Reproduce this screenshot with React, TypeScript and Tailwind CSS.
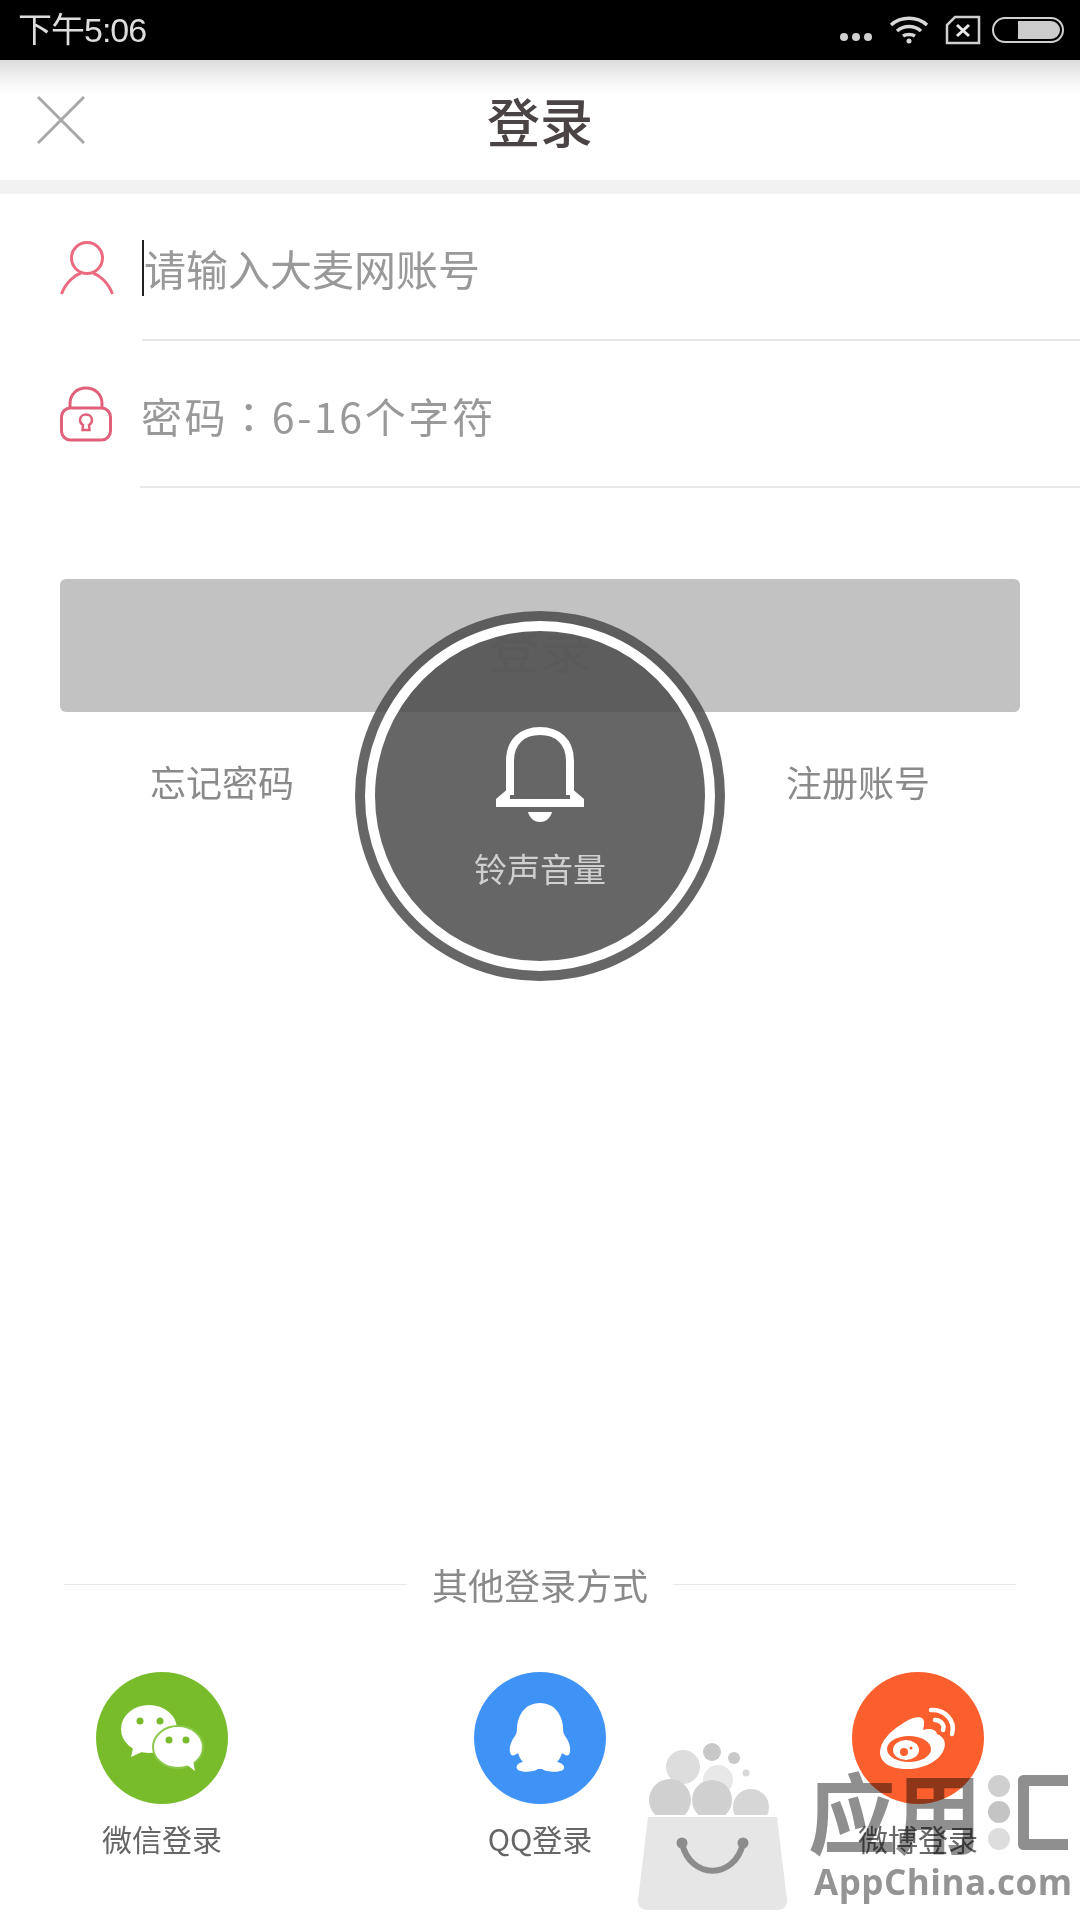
const cjk = "font-['Noto_Sans_CJK_SC','Noto_Sans',sans-serif]"

function StatusBar() {
  return (
    <div className="h-[60px] shrink-0 bg-black flex items-center justify-between pl-[18px] pr-[16px]">
      <span className={`text-[34px] leading-none text-[#dddddd] font-['Liberation_Sans','Noto_Sans_CJK_SC',sans-serif] tracking-[-1px]`}>下午5:06</span>
      <div className="flex items-center">
        <svg width="36" height="10" viewBox="0 0 36 10" className="mt-[14px] mr-[14px]">
          <circle cx="5" cy="5" r="4" fill="#d0d0d0" />
          <circle cx="17" cy="5" r="4" fill="#d0d0d0" />
          <circle cx="29" cy="5" r="4" fill="#d0d0d0" />
        </svg>
        <svg width="40" height="30" viewBox="0 0 40 30" fill="none" stroke="#d8d8d8" strokeWidth="3.5" className="mr-[16px]">
          <path d="M2 10C12 1 28 1 38 10" />
          <path d="M8 16C15 10 25 10 32 16" />
          <path d="M14 21C17 19 23 19 26 21" />
          <circle cx="20" cy="26" r="2.5" fill="#d8d8d8" stroke="none" />
        </svg>
        <svg width="36" height="30" viewBox="0 0 36 30" fill="none" stroke="#d0d0d0" strokeWidth="2.5" className="mr-[11px]">
          <path d="M10 2H34V28H2V10Z" />
          <path d="M12 10L24 21M24 10L12 21" strokeWidth="3" stroke="#e8e8e8" />
        </svg>
        <div className="w-[72px] h-[26px] rounded-full border-2 border-[#d0d0d0] p-[2px] flex justify-end">
          <div className="w-[42px] h-full bg-[#cccccc] rounded-r-full" />
        </div>
      </div>
    </div>
  )
}

function NavBar() {
  return (
    <div className="h-[120px] shrink-0 relative bg-gradient-to-b from-[#dcdcdc] via-[#f8f8f8] via-20% to-white to-30% flex items-center justify-center">
      <svg width="48" height="48" viewBox="0 0 48 48" className="absolute left-[37px] top-[36px]" fill="none" stroke="#a8a8a8" strokeWidth="3">
        <path d="M1 1L47 47M47 1L1 47" />
      </svg>
      <span className={`text-[53px] leading-none font-medium text-[#4a4444] ${cjk}`}>登录</span>
    </div>
  )
}

function UserIcon() {
  return (
    <svg width="54" height="56" viewBox="0 0 54 56" fill="none" stroke="#ec6a80" strokeWidth="3">
      <circle cx="27" cy="18" r="15.5" />
      <path d="M1.5 54C6 42 15 35 21 33M52.5 54C48 42 39 35 33 33" />
    </svg>
  )
}

function LockIcon() {
  return (
    <svg width="52" height="56" viewBox="0 0 52 56" fill="none" stroke="#e0607a" strokeWidth="3">
      <path d="M10 22V18C10 8 17 2 26 2S42 8 42 18V22" />
      <rect x="1.5" y="22" width="49" height="32" rx="9" />
      <path d="M22.5 44H29.5L29 39C31.5 37.500 32 35.500 32 34C32 30.500 29 28.500 26 28.500S20 30.500 20 34C20 35.500 20.500 37.500 23 39Z" strokeWidth="2.5" />
    </svg>
  )
}

function WechatIcon() {
  return (
    <svg width="132" height="132" viewBox="0 0 132 132" className="block">
      <circle cx="66" cy="66" r="66" fill="#78bc2c" />
      <ellipse cx="53" cy="57" rx="28" ry="24" fill="#ffffff" />
      <path d="M37 76L35 85L48 79Z" fill="#ffffff" />
      <circle cx="44" cy="49" r="3.500" fill="#78bc2c" />
      <circle cx="64" cy="49" r="3.500" fill="#78bc2c" />
      <ellipse cx="82" cy="75" rx="25" ry="21" fill="#ffffff" stroke="#8cc84a" strokeWidth="2" />
      <path d="M90 92L99 99L97 88Z" fill="#ffffff" />
      <circle cx="73" cy="68" r="3.500" fill="#78bc2c" />
      <circle cx="90" cy="68" r="3.500" fill="#78bc2c" />
    </svg>
  )
}

function QQIcon() {
  return (
    <svg width="132" height="132" viewBox="0 0 132 132" className="block">
      <circle cx="66" cy="66" r="66" fill="#3f93f7" />
      <path
        d="M66 31C53 31 45 40 43 54C43 58 43 61 41 64C38 68 35 74 36 80C37 85 40 84 44 81C45 85 47 88 49 90C43 91 41 95 44 98C49 101 60 100 64 97C65 97 67 97 68 97C72 100 84 101 89 98C92 95 89 91 83 90C85 88 87 85 88 81C92 84 95 85 96 80C97 74 94 68 91 64C89 61 89 58 89 54C87 40 79 31 66 31Z"
        fill="#ffffff"
      />
    </svg>
  )
}

function WeiboIcon() {
  return (
    <svg width="132" height="132" viewBox="0 0 132 132" className="block">
      <circle cx="66" cy="66" r="66" fill="#fb5f2d" />
      <path
        d="M50 52C58 46 68 43 71 47C73 50 72 54 71 58C77 56 84 57 85 62C93 65 94 72 92 77C88 89 72 97 55 97C39 97 28 91 28 80C28 70 38 59 50 52Z"
        fill="#ffffff"
      />
      <ellipse cx="57" cy="77" rx="22" ry="13" fill="#fb5f2d" />
      <ellipse cx="54" cy="78" rx="13" ry="10" fill="#ffffff" />
      <circle cx="52" cy="80" r="4" fill="#fb5f2d" />
      <circle cx="59" cy="76" r="1.500" fill="#fb5f2d" />
      <g fill="none" stroke="#ffffff" strokeWidth="4.500" strokeLinecap="round">
        <path d="M79 38C92 37 104 48 100 62" />
        <path d="M83 48C88 48 93 52 91 58" />
      </g>
    </svg>
  )
}

function Social({ label, children }: { label: string; children: React.ReactNode }) {
  return (
    <div className="w-[132px] flex flex-col items-center">
      {children}
      <span className={`mt-[16px] text-[30px] leading-[36px] whitespace-nowrap text-[#666666] ${cjk}`}>{label}</span>
    </div>
  )
}

function VolumeToast() {
  return (
    <div className="absolute left-[355px] top-[611px] w-[370px] h-[370px] rounded-full bg-[#4b4b4b]/85 p-[10px]">
      <div className="w-full h-full rounded-full border-[10px] border-white flex flex-col items-center pt-[96px]">
        <svg width="88" height="96" viewBox="0 0 88 96" fill="none">
          <path d="M14 68V34C14 14 27 4 44 4S74 14 74 34V68" stroke="#ffffff" strokeWidth="8" />
          <path d="M0 80H88V72L74 60V72H14V60L0 72Z" fill="#ffffff" />
          <path d="M32 85H56C54 92 49 95 44 95S34 92 32 85Z" fill="#ffffff" />
        </svg>
        <span className={`mt-[25px] text-[33px] leading-[40px] text-[#cfcfcf] ${cjk}`}>铃声音量</span>
      </div>
    </div>
  )
}

function Watermark() {
  return (
    <div className="absolute left-[636px] top-[1740px] w-[440px] h-[175px] mix-blend-multiply">
      <svg width="154" height="175" viewBox="0 0 154 175" className="absolute left-0 top-0">
        <circle cx="47" cy="27" r="17" fill="#dddddd" />
        <circle cx="76" cy="12" r="9" fill="#c8c8c8" />
        <circle cx="98" cy="18" r="6" fill="#c8c8c8" />
        <circle cx="110" cy="33" r="3.500" fill="#d8d8d8" />
        <circle cx="82" cy="40" r="15" fill="#e8e8e8" />
        <circle cx="34" cy="60" r="21" fill="#d0d0d0" />
        <circle cx="76" cy="60" r="20" fill="#d0d0d0" />
        <circle cx="115" cy="67" r="18" fill="#d6d6d6" />
        <rect x="0" y="75" width="154" height="10" fill="#ffffff" />
        <path d="M12 77H141L151 160C151 167 147 170 141 170H12C6 170 2 167 2 160Z" fill="#e6e6e6" />
        <path d="M46 103C54 140 99 140 107 103" fill="none" stroke="#8c8c8c" strokeWidth="6" />
        <circle cx="46" cy="103" r="5.500" fill="#8c8c8c" />
        <circle cx="107" cy="103" r="5.500" fill="#8c8c8c" />
      </svg>
      <div className={`absolute left-[172px] top-[13px] text-[88px] leading-[112px] font-bold text-[#8f8f8f] tracking-[-2px] ${cjk}`}>应用</div>
      <svg width="85" height="82" viewBox="0 0 85 82" className="absolute left-[350px] top-[32px]">
        <circle cx="13" cy="14" r="11" fill="#cfcfcf" />
        <circle cx="13" cy="40" r="11" fill="#c4c4c4" />
        <circle cx="13" cy="67" r="11" fill="#dddddd" />
        <path d="M82 8.500H37.500V72.500H82" fill="none" stroke="#8f8f8f" strokeWidth="11" strokeLinejoin="round" />
      </svg>
      <div className="absolute left-[178px] top-[117px] text-[35px] leading-[50px] font-bold tracking-[0.5px] text-[#949494] font-['Open_Sans',sans-serif] whitespace-nowrap">AppChina.com</div>
    </div>
  )
}

export default function App() {
  return (
    <div className="relative w-[1080px] h-[1920px] overflow-hidden bg-white flex flex-col">
      <StatusBar />
      <NavBar />
      <div className="h-[14px] shrink-0 bg-[#f2f2f2]" />

      <div className="h-[147px] shrink-0 pl-[60px] flex items-start">
        <div className="mt-[46px]"><UserIcon /></div>
        <div className="ml-[28px] flex-1 h-full border-b-2 border-[#e8e8e8] flex items-start">
          <div className="mt-[46px] h-[56px] w-[2px] bg-[#222222] shrink-0" />
          <span className={`mt-[48px] text-[42px] leading-[52px] text-[#999999] ${cjk}`}>请输入大麦网账号</span>
        </div>
      </div>
      <div className="h-[147px] shrink-0 pl-[60px] flex items-start">
        <div className="mt-[45px]"><LockIcon /></div>
        <div className="ml-[28px] flex-1 h-full border-b-2 border-[#e8e8e8]">
          <div className="mt-[49px] pl-[1px] text-[41px] leading-[50px] tracking-[2.6px] text-[#999999] font-['Noto_Sans_CJK_TC','Noto_Sans',sans-serif]">密码：6-16个字符</div>
        </div>
      </div>

      <div className="mt-[91px] mx-[60px] h-[133px] shrink-0 rounded-[6px] bg-[#c2c2c2] flex justify-center items-start">
        <span className={`mt-[35px] text-[52px] leading-[66px] text-[#acacac] ${cjk}`}>登录</span>
      </div>

      <div className={`mt-[47px] pl-[150px] pr-[150px] flex justify-between text-[36px] leading-[44px] text-[#8a8a8a] ${cjk}`}>
        <span>忘记密码</span>
        <span>注册账号</span>
      </div>

      <div className="flex-1" />

      <div className="px-[64px] flex items-center">
        <div className="flex-1 h-[1px] bg-[#e8e8e8]" />
        <span className={`mx-[25px] text-[36px] leading-[46px] text-[#8a8a8a] ${cjk}`}>其他登录方式</span>
        <div className="flex-1 h-[1px] bg-[#e8e8e8]" />
      </div>

      <div className="mt-[65px] mb-[64px] px-[96px] flex justify-between">
        <Social label="微信登录"><WechatIcon /></Social>
        <Social label="QQ登录"><QQIcon /></Social>
        <Social label="微博登录"><WeiboIcon /></Social>
      </div>

      <VolumeToast />
      <Watermark />
    </div>
  )
}
